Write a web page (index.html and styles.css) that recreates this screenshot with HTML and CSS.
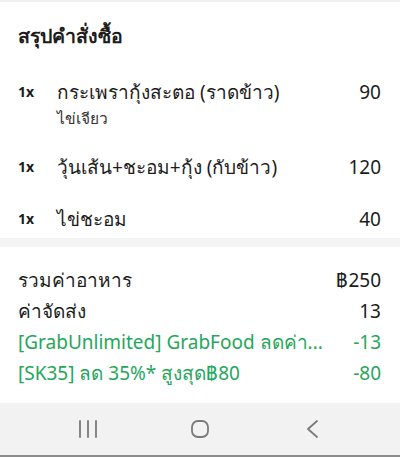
FILE: index.html
```html
<!DOCTYPE html>
<html lang="th">
<head>
  <meta charset="UTF-8">
  <title>สรุปคำสั่งซื้อ</title>
  <link rel="stylesheet" href="styles.css">
</head>
<body>

  <div class="screen">
    <section class="order">
      <h2 class="order-title">สรุปคำสั่งซื้อ</h2>

      <div class="item">
        <span class="qty">1x</span>
        <div class="item-info">
          <div class="item-name">กระเพรากุ้งสะตอ (ราดข้าว)</div>
          <div class="item-note">ไข่เจียว</div>
        </div>
        <span class="price">90</span>
      </div>

      <div class="item">
        <span class="qty">1x</span>
        <div class="item-info">
          <div class="item-name">วุ้นเส้น+ชะอม+กุ้ง (กับข้าว)</div>
        </div>
        <span class="price">120</span>
      </div>

      <div class="item">
        <span class="qty">1x</span>
        <div class="item-info">
          <div class="item-name">ไข่ชะอม</div>
        </div>
        <span class="price">40</span>
      </div>
    </section>

    <div class="divider"></div>

    <section class="summary">
      <div class="sum-row">
        <span class="sum-label">รวมค่าอาหาร</span>
        <span class="sum-value">฿250</span>
      </div>
      <div class="sum-row">
        <span class="sum-label">ค่าจัดส่ง</span>
        <span class="sum-value">13</span>
      </div>
      <div class="sum-row discount">
        <span class="sum-label">[GrabUnlimited] GrabFood ลดค่า...</span>
        <span class="sum-value">-13</span>
      </div>
      <div class="sum-row discount">
        <span class="sum-label">[SK35] ลด 35%* สูงสุด฿80</span>
        <span class="sum-value">-80</span>
      </div>
    </section>

    <nav class="navbar">
      <!-- recent apps -->
      <svg class="nav-icon" width="20" height="20" viewBox="0 0 20 20">
        <path d="M2 2v16M10 2v16M18 2v16" stroke="#7a7a7a" stroke-width="1.8" fill="none" stroke-linecap="round"/>
      </svg>
      <!-- home -->
      <svg class="nav-icon" width="20" height="20" viewBox="0 0 20 20">
        <rect x="2" y="2" width="16" height="16" rx="6" stroke="#7a7a7a" stroke-width="1.8" fill="none"/>
      </svg>
      <!-- back -->
      <svg class="nav-icon" width="20" height="20" viewBox="0 0 20 20">
        <path d="M15 2l-9 8 9 8" stroke="#7a7a7a" stroke-width="1.8" fill="none" stroke-linecap="round" stroke-linejoin="round"/>
      </svg>
    </nav>
  </div>

</body>
</html>
```

FILE: styles.css
```css
body {
  margin: 0;
  font-family: "Noto Sans", "Open Sans", sans-serif;
  color: #1c1c1c;
  background-color: white;
}

.screen {
  width: 400px;
  height: 457px;
  display: flex;
  flex-direction: column;
  border-top: 2px solid #efefef;
  box-sizing: border-box;
}

.order {
  padding: 0 19px 4px 18px;
}

.order-title {
  font-size: 19.5px;
  font-weight: bold;
  margin: 19px 0 26px;
  line-height: 30px;
}

.item {
  display: flex;
  align-items: flex-start;
  margin-bottom: 22px;
}

.item:last-child {
  margin-bottom: 0;
}

.qty {
  width: 39px;
  font-size: 14px;
  font-weight: bold;
  line-height: 30px;
}

.item-info {
  flex: 1;
}

.item-name {
  font-size: 19px;
  line-height: 30px;
}

.item-note {
  font-size: 15.5px;
  line-height: 23px;
  color: #333;
}

.price {
  font-size: 19px;
  line-height: 30px;
}

.divider {
  height: 9px;
  background-color: #f4f4f4;
}

.summary {
  flex: 1;
  padding: 18px 19px 0 18px;
}

.sum-row {
  display: flex;
  justify-content: space-between;
  font-size: 19px;
  line-height: 31px;
}

.discount {
  color: #26a65b;
}

.navbar {
  height: 52px;
  background-color: #f2f2f2;
  border-bottom: 2px solid #8c8c8c;
  display: flex;
  justify-content: center;
  align-items: center;
  gap: 92px;
}
```
